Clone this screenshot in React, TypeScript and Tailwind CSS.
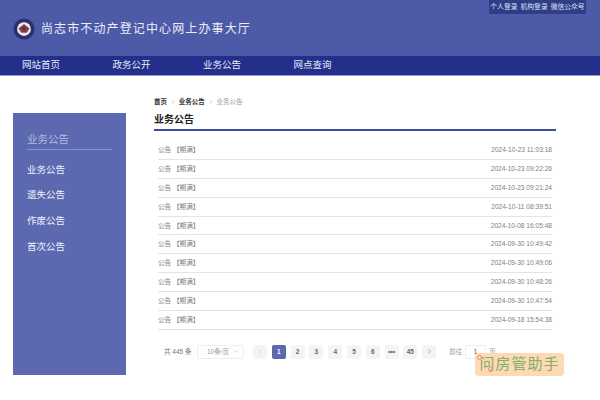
import { ChevronDown, ChevronLeft, ChevronRight } from "lucide-react";

const navItems = ["网站首页", "政务公开", "业务公告", "网点查询"];
const sideItems = ["业务公告", "遗失公告", "作废公告", "首次公告"];
const dates = [
  "2024-10-23 11:03:18",
  "2024-10-23 09:22:26",
  "2024-10-23 09:21:24",
  "2024-10-11 08:39:51",
  "2024-10-08 16:05:48",
  "2024-09-30 10:49:42",
  "2024-09-30 10:49:06",
  "2024-09-30 10:48:26",
  "2024-09-30 10:47:54",
  "2024-09-18 15:54:38",
];
const pages = ["2", "3", "4", "5", "6", "•••", "45"];

function Logo() {
  return (
    <svg width="22" height="22" viewBox="0 0 24 24" className="shrink-0">
      <circle cx="12" cy="12" r="11.5" fill="#2a3170" />
      <circle cx="12" cy="12" r="7.5" fill="#f2f0ee" />
      <path d="M12 6.5 18 11.5 15 16H9L6 11.5Z" fill="#8f3a3c" />
      <path d="M12 9.5 14.5 11.5 12 13.5 9.5 11.5Z" fill="#2f3c7c" />
    </svg>
  );
}

export default function App() {
  return (
    <div
      className="relative w-[600px] h-[400px] overflow-hidden bg-white"
      style={{ fontFamily: '"Liberation Sans", "Noto Sans CJK SC", sans-serif' }}
    >
      <header className="h-[56px] bg-[#4c5aa8] flex flex-col">
        <div className="flex justify-end pr-[14px]">
          <div className="h-[14px] w-[97px] bg-[#2f3c86] flex items-center justify-center gap-[3px] text-[6.8px] text-[#dfe2f3]">
            <span>个人登录</span>
            <span>机构登录</span>
            <span>微信公众号</span>
          </div>
        </div>
        <div className="flex items-center gap-[6px] pl-[13px] mt-[4px]">
          <Logo />
          <span className="text-[12px] tracking-[1.12px] text-[#eceef8]">尚志市不动产登记中心网上办事大厅</span>
        </div>
      </header>

      <nav className="h-[20px] bg-[#232f8a] border-b border-[#8f99d4] flex items-center pl-[22px]">
        {navItems.map((n) => (
          <span key={n} className="w-[90.5px] text-[9.5px] text-[#e8eaf6]">
            {n}
          </span>
        ))}
      </nav>

      <div className="flex pl-[13px] pt-[19px]">
        <aside className="w-[113px] h-[262px] mt-[18px] bg-[#5c68b0] px-[14px] pt-[19px]">
          <div className="text-[10.5px] leading-[14px] text-[#b6bce0] border-b border-[#8a93c8] pb-[3px]">业务公告</div>
          <ul className="mt-[7px]">
            {sideItems.map((s) => (
              <li key={s} className="h-[25.7px] flex items-center text-[9.5px] text-[#f2f3fa]">
                {s}
              </li>
            ))}
          </ul>
        </aside>

        <main className="w-[402px] ml-[28px]">
          <div className="flex items-center h-[14px] text-[6.5px] text-[#9a9a9a]">
            <span className="font-bold text-[#333]">首页</span>
            <span className="mx-[4px] text-[#ccc]">&gt;</span>
            <span className="font-bold text-[#333]">业务公告</span>
            <span className="mx-[4px] text-[#ccc]">&gt;</span>
            <span>业务公告</span>
          </div>
          <h1 className="mt-[2px] pb-[2px] h-[20px] flex items-center text-[10px] font-bold text-[#222] border-b-2 border-[#3d4a9e]">
            业务公告
          </h1>
          <ul className="mx-[4px] mt-[10px]">
            {dates.map((d) => (
              <li key={d} className="h-[18.9px] flex items-center justify-between border-b border-[#e4e4e4] text-[6.6px] text-[#808080]">
                <span>公告 【期满】</span>
                <span>{d}</span>
              </li>
            ))}
          </ul>

          <div className="flex items-center mt-[15px] ml-[10px] h-[14px] text-[6.5px] text-[#777]">
            <span className="w-[33px]">共 445 条</span>
            <div className="w-[47px] h-[14px] border border-[#efefef] rounded-[2px] flex items-center justify-between pl-[9px] pr-[3px]">
              <span className="text-[#999]">10条/页</span>
              <ChevronDown size={7} className="text-[#bbb]" />
            </div>
            <div className="flex items-center gap-[4.8px] ml-[9px]">
              <div className="w-[14px] h-[14px] bg-[#f4f4f5] rounded-[2px] flex items-center justify-center">
                <ChevronLeft size={7} className="text-[#bbb]" />
              </div>
              <div className="w-[14px] h-[14px] bg-[#5c68b0] rounded-[2px] flex items-center justify-center font-bold text-white">
                1
              </div>
              {pages.map((p) => (
                <div key={p} className="w-[14px] h-[14px] bg-[#f4f4f5] rounded-[2px] flex items-center justify-center font-bold text-[#666]">
                  {p}
                </div>
              ))}
              <div className="w-[14px] h-[14px] bg-[#f4f4f5] rounded-[2px] flex items-center justify-center">
                <ChevronRight size={7} className="text-[#666]" />
              </div>
            </div>
            <span className="ml-[13px] text-[#999]">前往</span>
            <div className="w-[21px] h-[14px] mx-[3px] border border-[#efefef] rounded-[2px] flex items-center justify-center text-[#555]">
              1
            </div>
            <span className="text-[#999]">页</span>
          </div>
        </main>
      </div>

      <div className="absolute left-[475px] top-[353px] w-[89px] h-[23px] rounded-[4px] bg-[#fdd9b5] flex items-center justify-center text-[15px] tracking-[1px] text-[#7fae6f]">
        问房管助手
        <span className="absolute left-[2px] top-[2px] w-[5px] h-[5px] rounded-full border border-[#f58a5c]" />
        <span className="absolute left-[13px] top-[14px] w-[5px] h-[5px] rounded-full border border-[#f58a5c]" />
      </div>
    </div>
  );
}
